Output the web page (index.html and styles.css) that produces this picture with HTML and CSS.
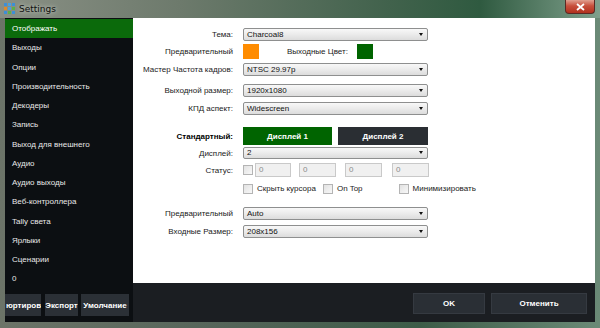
FILE: index.html
```html
<!DOCTYPE html>
<html lang="ru">
  <head>
    <meta charset="UTF-8" />
    <meta name="viewport" content="width=device-width, initial-scale=1.0" />
    <title>Settings</title>
    <link rel="stylesheet" href="styles.css">
  </head>
  <body>
    <div class="window">
      <div class="titlebar">
        <svg class="app-icon" width="11" height="11" viewBox="0 0 11 11">
          <rect x="0" y="0" width="3" height="3" fill="#3d8fd6" />
          <rect x="4" y="0" width="3" height="3" fill="#4aa0e0" />
          <rect x="8" y="0" width="3" height="3" fill="#3d8fd6" />
          <rect x="0" y="4" width="3" height="3" fill="#e08a2a" />
          <rect x="4" y="4" width="3" height="3" fill="#4aa0e0" />
          <rect x="8" y="4" width="3" height="3" fill="#5bb04a" />
          <rect x="0" y="8" width="3" height="3" fill="#3d8fd6" />
          <rect x="4" y="8" width="3" height="3" fill="#5bb04a" />
          <rect x="8" y="8" width="3" height="3" fill="#3d8fd6" />
        </svg>
        <span class="title">Settings</span>
        <div class="close">
          <svg width="9" height="8" viewBox="0 0 9 8">
            <path d="M1 1 L8 7 M8 1 L1 7" stroke="#fff" stroke-width="1.8" />
          </svg>
        </div>
      </div>

      <div class="client">
        <nav class="sidebar">
          <ul class="menu">
            <li class="active">Отображать</li>
            <li>Выходы</li>
            <li>Опции</li>
            <li>Производительность</li>
            <li>Декодеры</li>
            <li>Запись</li>
            <li>Выход для внешнего</li>
            <li>Аудио</li>
            <li>Аудио выходы</li>
            <li>Веб-контроллера</li>
            <li>Tally света</li>
            <li>Ярлыки</li>
            <li>Сценарии</li>
            <li>0</li>
          </ul>
          <div class="side-buttons">
            <button class="side-btn import">юртиров</button>
            <button class="side-btn export">Экспорт</button>
            <button class="side-btn defaults">Умолчание</button>
          </div>
        </nav>

        <div class="main">
          <div class="panel">
            <div class="row r-theme">
              <label class="label">Тема:</label>
              <div class="select">Charcoal8</div>
            </div>
            <div class="row r-colors">
              <label class="label">Предварительный</label>
              <span class="swatch orange"></span>
              <span class="inline-label">Выходные Цвет:</span>
              <span class="swatch green"></span>
            </div>
            <div class="row r-fps">
              <label class="label">Мастер Частота кадров:</label>
              <div class="select">NTSC 29.97p</div>
            </div>
            <div class="row r-size">
              <label class="label">Выходной размер:</label>
              <div class="select">1920x1080</div>
            </div>
            <div class="row r-aspect">
              <label class="label">КПД аспект:</label>
              <div class="select">Widescreen</div>
            </div>
            <div class="row r-standard">
              <label class="label bold">Стандартный:</label>
              <div class="display-buttons">
                <button class="display-btn on">Дисплей 1</button>
                <button class="display-btn">Дисплей 2</button>
              </div>
            </div>
            <div class="row r-display">
              <label class="label">Дисплей:</label>
              <div class="select">2</div>
            </div>
            <div class="row r-status">
              <label class="label">Статус:</label>
              <span class="check"></span>
              <span class="num n1">0</span>
              <span class="num n2">0</span>
              <span class="num n3">0</span>
              <span class="num n4">0</span>
            </div>
            <div class="row r-checks">
              <span class="label"></span>
              <span class="check"></span><span class="check-text">Скрыть курсора</span>
              <span class="check c2"></span><span class="check-text">On Top</span>
              <span class="check c3"></span><span class="check-text">Минимизировать</span>
            </div>
            <div class="row r-preview">
              <label class="label">Предварительный</label>
              <div class="select">Auto</div>
            </div>
            <div class="row r-input">
              <label class="label">Входные Размер:</label>
              <div class="select">208x156</div>
            </div>
          </div>
          <div class="footer">
            <button class="foot-btn ok">OK</button>
            <button class="foot-btn cancel">Отменить</button>
          </div>
        </div>
      </div>
    </div>
  </body>
</html>
```

FILE: styles.css
```css
body {
  margin: 0;
  font-family: "Liberation Sans", Arial, sans-serif;
  font-size: 8px;
  background: #ffffff;
}
.window {
  width: 600px;
  height: 328px;
  display: flex;
  flex-direction: column;
  background: linear-gradient(90deg, #6c7468 0%, #56655a 35%, #3d5c48 70%, #6b8a77 100%);
  overflow: hidden;
}
.titlebar {
  height: 18px;
  display: flex;
  align-items: center;
  background: linear-gradient(90deg, #8a9085 0%, #6d7a6c 30%, #41624c 65%, #2f5a40 80%, #7fa08c 100%);
}
.app-icon {
  margin-left: 4px;
  margin-top: -1px;
}
.title {
  margin-left: 4px;
  font-family: "DejaVu Sans", sans-serif;
  font-size: 9px;
  color: #101010;
  text-shadow: 0 0 4px #d8dcd4;
}
.close {
  margin-left: auto;
  margin-right: 5px;
  align-self: flex-start;
  width: 30px;
  height: 14px;
  border: 1px solid #5a2a24;
  border-top: none;
  border-radius: 0 0 4px 4px;
  box-sizing: border-box;
  background: linear-gradient(180deg, #e0a090 0%, #c8503c 45%, #b0301e 100%);
  display: flex;
  align-items: center;
  justify-content: center;
}
.client {
  flex: 1;
  display: flex;
  margin: 0 5px 6px 5px;
  min-height: 0;
}
.sidebar {
  width: 128px;
  background: #0c0f12;
  display: flex;
  flex-direction: column;
  padding-top: 1px;
  padding-bottom: 6px;
  box-sizing: border-box;
}
.menu {
  list-style: none;
  margin: 0;
  padding: 0;
}
.menu li {
  height: 19.25px;
  line-height: 19px;
  padding-left: 7px;
  color: #e8e8e8;
  font-size: 8px;
  white-space: nowrap;
}
.menu li.active {
  background: #0b6a0b;
  color: #ffffff;
}
.side-buttons {
  margin-top: auto;
  display: flex;
  height: 22px;
}
.side-btn {
  height: 22px;
  padding: 0;
  border: none;
  background: #2b3036;
  color: #ffffff;
  font-family: "Liberation Sans", Arial, sans-serif;
  font-size: 8px;
  font-weight: bold;
  white-space: nowrap;
  overflow: hidden;
}
.side-btn.import {
  width: 36px;
  text-align: left;
  padding-left: 1px;
}
.side-btn.export {
  width: 33px;
  margin-left: 4px;
}
.side-btn.defaults {
  width: 48px;
  margin-left: 3px;
}
.main {
  width: 462px;
  display: flex;
  flex-direction: column;
}
.panel {
  height: 265px;
  background: #ffffff;
  display: flex;
  flex-direction: column;
}
.row {
  display: flex;
  align-items: center;
  color: #1a1a1a;
}
.label {
  width: 100px;
  flex: none;
  text-align: right;
  margin-right: 10px;
  white-space: nowrap;
}
.label.bold {
  font-weight: bold;
  color: #000;
}
.select {
  width: 185px;
  height: 13px;
  box-sizing: border-box;
  border: 1px solid #8e8f8f;
  border-radius: 2px;
  background: linear-gradient(180deg, #f8f8f8 0%, #ebebeb 50%, #dcdcdc 100%);
  padding-left: 3px;
  line-height: 11px;
  position: relative;
  color: #111;
}
.select::after {
  content: "";
  position: absolute;
  right: 4px;
  top: 4px;
  border-left: 2.5px solid transparent;
  border-right: 2.5px solid transparent;
  border-top: 3px solid #111;
}
.r-theme { margin-top: 10px; }
.r-colors { margin-top: 2px; height: 16px; }
.r-fps { margin-top: 4px; }
.r-size { margin-top: 8px; }
.r-aspect { margin-top: 5px; }
.r-standard { margin-top: 12px; height: 18px; }
.r-display { margin-top: 2px; }
.r-status { margin-top: 4px; height: 14px; }
.r-checks { margin-top: 7px; height: 9px; }
.r-preview { margin-top: 14px; }
.r-input { margin-top: 5px; }
.r-display .select { height: 12px; line-height: 10px; }
.r-display .select::after { top: 3px; }
.swatch {
  width: 16px;
  height: 15px;
  flex: none;
}
.swatch.orange { background: #ff8c00; }
.swatch.green { background: #006400; }
.inline-label {
  margin-left: 28px;
  margin-right: 9px;
  white-space: nowrap;
}
.display-buttons {
  display: flex;
  gap: 6px;
}
.display-btn {
  width: 90px;
  height: 18px;
  border: none;
  padding: 0;
  background: #2a2e33;
  color: #ffffff;
  font-family: "Liberation Sans", Arial, sans-serif;
  font-size: 8px;
  font-weight: bold;
}
.display-btn.on {
  width: 89px;
  background: #006400;
}
.check {
  width: 8px;
  height: 8px;
  flex: none;
  border: 1px solid #b4b4b4;
  background: linear-gradient(135deg, #e2e2e2, #f8f8f8);
}
.check-text {
  margin-left: 4px;
  white-space: nowrap;
  color: #222;
}
.check.c2 { margin-left: 7px; }
.check.c3 { margin-left: 36px; }
.num {
  height: 14px;
  box-sizing: border-box;
  border: 1px solid #c9c9c9;
  background: #f0f0f0;
  color: #8a8a8a;
  padding-left: 3px;
  line-height: 12px;
}
.num.n1 { width: 36px; margin-left: 2px; }
.num.n2 { width: 37px; margin-left: 8px; }
.num.n3 { width: 37px; margin-left: 9px; }
.num.n4 { width: 37px; margin-left: 10px; }
.footer {
  flex: 1;
  background: #1b1e22;
  display: flex;
  justify-content: flex-end;
  align-items: flex-start;
  gap: 6px;
  padding: 10px 8px 0 0;
}
.foot-btn {
  height: 21px;
  border: 1px solid #353a41;
  background: #2a2f35;
  color: #ffffff;
  font-family: "Liberation Sans", Arial, sans-serif;
  font-size: 8px;
  font-weight: bold;
}
.foot-btn.ok { width: 72px; }
.foot-btn.cancel { width: 96px; }
```
